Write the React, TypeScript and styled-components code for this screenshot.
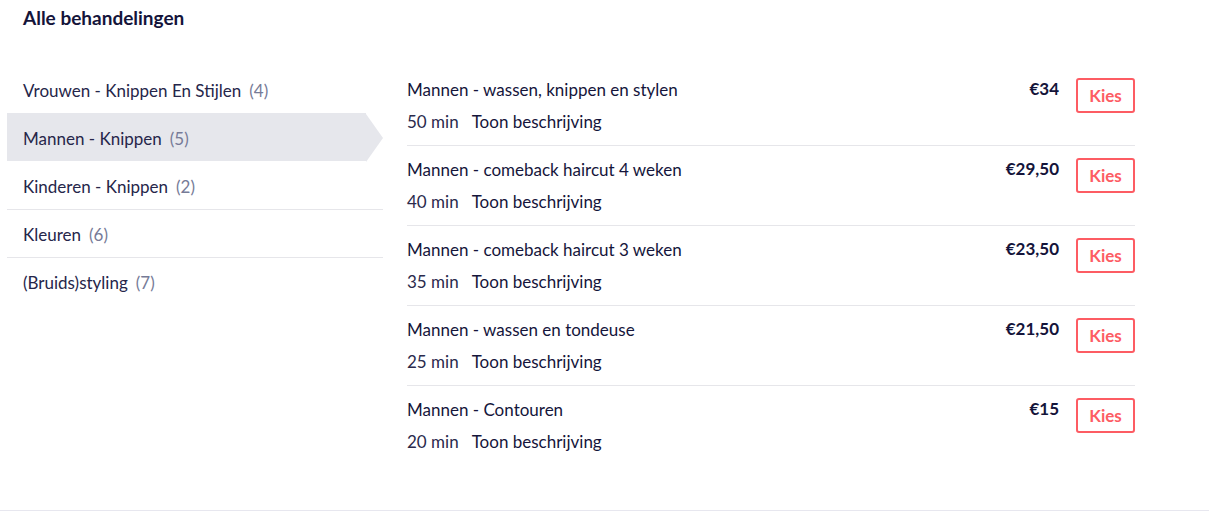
import React from "react";
import styled, { createGlobalStyle } from "styled-components";

const Global = createGlobalStyle`
  html, body { margin: 0; padding: 0; background: #fff; }
  body { font-family: "Lato", "Noto Sans", sans-serif; color: #1b1b3f; -webkit-font-smoothing: antialiased; }
`;

const Page = styled.div`
  width: 1209px;
  height: 510px;
  border-bottom: 1px solid #e7e7ef;
  box-sizing: content-box;
`;

const Title = styled.h2`
  margin: 0;
  padding: 7px 0 0 23px;
  height: 65px;
  box-sizing: border-box;
  font-size: 19px;
  line-height: 22px;
  font-weight: 700;
  color: #14143a;
`;

const Columns = styled.div`
  display: flex;
  align-items: flex-start;
  gap: 24px;
  padding-left: 7px;
`;

const Categories = styled.ul`
  list-style: none;
  margin: 0;
  padding: 0;
  width: 376px;
`;

const Category = styled.li<{ $selected?: boolean; $divider?: boolean }>`
  position: relative;
  height: 48px;
  display: flex;
  align-items: center;
  padding: 1px 0 0 16px;
  box-sizing: border-box;
  font-size: 17px;
  color: #26264a;
  border-top: 1px solid ${(p) => (p.$divider ? "#e6e6ea" : "transparent")};
  background: ${(p) => (p.$selected ? "#e6e7ec" : "transparent")};
  margin-right: ${(p) => (p.$selected ? "17px" : "0")};
  ${(p) =>
    p.$selected &&
    `
    &::after {
      content: "";
      position: absolute;
      top: 0;
      right: -17px;
      width: 0;
      height: 0;
      border-top: 24px solid transparent;
      border-bottom: 24px solid transparent;
      border-left: 17px solid #e6e7ec;
    }
  `}
`;

const Count = styled.span`
  color: #767b97;
  margin-left: 8px;
`;

const Treatments = styled.div`
  width: 728px;
  margin-top: 1px;
`;

const Treatment = styled.div<{ $last?: boolean }>`
  display: flex;
  align-items: flex-start;
  padding: 13px 0 12px;
  border-bottom: 1px solid ${(p) => (p.$last ? "transparent" : "#e6e6ea")};
`;

const Info = styled.div`
  flex: 1;
  display: flex;
  flex-direction: column;
  gap: 10px;
`;

const Name = styled.div`
  font-size: 17px;
  line-height: 22px;
  color: #15153b;
`;

const Meta = styled.div`
  font-size: 17px;
  line-height: 22px;
  display: flex;
  gap: 13px;
`;

const Duration = styled.span`
  color: #2a2a4c;
`;

const Describe = styled.span`
  color: #15153b;
`;

const Price = styled.div`
  font-size: 17px;
  line-height: 22px;
  font-weight: 700;
  color: #14143a;
  margin-top: -1px;
  margin-right: 17px;
`;

const Button = styled.button`
  width: 59px;
  height: 35px;
  margin-top: -1px;
  border: 2px solid #fd5c63;
  border-radius: 3px;
  background: #fff;
  color: #fd5c63;
  font-family: inherit;
  font-size: 17px;
  font-weight: 700;
  padding: 0;
  cursor: pointer;
`;

const categories = [
  { name: "Vrouwen - Knippen En Stijlen", count: 4 },
  { name: "Mannen - Knippen", count: 5 },
  { name: "Kinderen - Knippen", count: 2 },
  { name: "Kleuren", count: 6 },
  { name: "(Bruids)styling", count: 7 },
];

const treatments = [
  { name: "Mannen - wassen, knippen en stylen", min: 50, price: "€34" },
  { name: "Mannen - comeback haircut 4 weken", min: 40, price: "€29,50" },
  { name: "Mannen - comeback haircut 3 weken", min: 35, price: "€23,50" },
  { name: "Mannen - wassen en tondeuse", min: 25, price: "€21,50" },
  { name: "Mannen - Contouren", min: 20, price: "€15" },
];

export default function App() {
  const selected = 1;
  return (
    <>
      <Global />
      <Page>
        <Title>Alle behandelingen</Title>
        <Columns>
          <Categories>
            {categories.map((c, i) => (
              <Category
                key={c.name}
                $selected={i === selected}
                $divider={i > 0 && i !== selected && i - 1 !== selected}
              >
                {c.name}
                <Count>({c.count})</Count>
              </Category>
            ))}
          </Categories>
          <Treatments>
            {treatments.map((t, i) => (
              <Treatment key={t.name} $last={i === treatments.length - 1}>
                <Info>
                  <Name>{t.name}</Name>
                  <Meta>
                    <Duration>{t.min} min</Duration>
                    <Describe>Toon beschrijving</Describe>
                  </Meta>
                </Info>
                <Price>{t.price}</Price>
                <Button>Kies</Button>
              </Treatment>
            ))}
          </Treatments>
        </Columns>
      </Page>
    </>
  );
}
